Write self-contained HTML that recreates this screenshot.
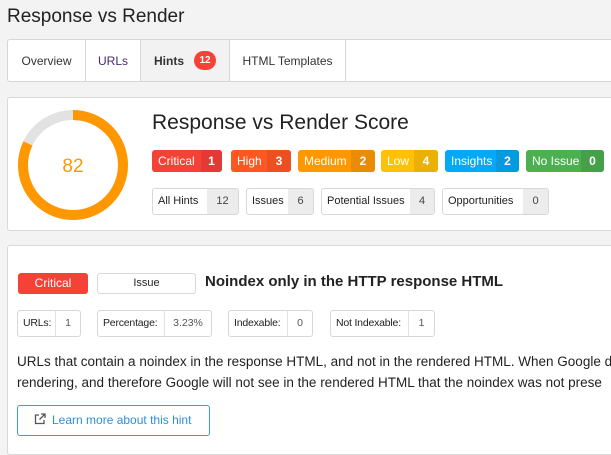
<!DOCTYPE html>
<html><head><style>
*{box-sizing:border-box;margin:0;padding:0}
body{width:611px;height:442px;overflow:hidden;background:#f3f3f3;font-family:"Liberation Sans",sans-serif;color:#222;position:relative}
.a{position:absolute}
h1{position:absolute;left:7px;top:6px;font-size:19px;font-weight:normal;color:#222}
.tabs{left:7px;top:39px;width:620px;height:43px;background:#fff;border:1px solid #d6d6d6;border-radius:3px;display:flex;font-size:12px}
.tabs div{border-right:1px solid #d6d6d6;display:flex;align-items:center;justify-content:center;color:#333}
.panel{background:#fff;border:1px solid #d8d8d8;border-radius:3px}
.b{position:absolute;display:flex;height:22px;border-radius:3px;overflow:hidden;color:#fff;font-size:12px;line-height:22px;white-space:nowrap}
.b span{padding-left:6px;flex:1}
.b i{font-style:normal;font-weight:bold;text-align:center}
.g{position:absolute;display:flex;height:27px;border:1px solid #d8d8d8;border-radius:3px;overflow:hidden;font-size:11px;line-height:25px;color:#222;background:#fff;white-space:nowrap}
.g span{padding-left:5px;flex:1}
.g i{font-style:normal;text-align:center;background:#ececec;color:#444}
.s{position:absolute;display:flex;height:27px;border:1px solid #d8d8d8;border-radius:3px;font-size:10.5px;line-height:25px;background:#fff;white-space:nowrap;overflow:hidden}
.s span{padding-left:5px;flex:1;border-right:1px solid #e2e2e2;letter-spacing:-0.2px}
.s i{font-style:normal;text-align:center;color:#555}
</style></head><body>
<h1>Response vs Render</h1>
<div class="a tabs">
<div style="width:78px">Overview</div>
<div style="width:55px;color:#4a2a6a">URLs</div>
<div style="width:89px;background:#f2f2f2;font-weight:bold">Hints <span style="display:inline-block;margin-left:10px;background:#f44336;color:#fff;border-radius:10px;width:22px;height:19px;line-height:19px;text-align:center;font-size:10px;font-weight:bold">12</span></div>
<div style="width:116px">HTML Templates</div>
</div>
<div class="a panel" style="left:7px;top:97px;width:620px;height:134px"></div>
<svg class="a" style="left:18px;top:110px" width="110" height="110">
<circle cx="55" cy="55" r="50" fill="none" stroke="#e2e2e2" stroke-width="10"/>
<circle cx="55" cy="55" r="50" fill="none" stroke="#ff9800" stroke-width="10" stroke-dasharray="257.6 400" transform="rotate(-90 55 55)"/>
<text x="55" y="62" text-anchor="middle" font-family="Liberation Sans" font-size="19" fill="#ff9800">82</text>
</svg>
<div class="a" style="left:152px;top:111px;font-size:21px;color:#222">Response vs Render Score</div>
<div class="b" style="left:152px;top:150px;width:70px;background:#f44336"><span>Critical</span><i style="width:21px;background:#e53935">1</i></div>
<div class="b" style="left:231px;top:150px;width:60px;background:#ff5722"><span>High</span><i style="width:24px;background:#ec5020">3</i></div>
<div class="b" style="left:298px;top:150px;width:77px;background:#ff9800"><span>Medium</span><i style="width:24px;background:#ea8c00">2</i></div>
<div class="b" style="left:381px;top:150px;width:57px;background:#ffc107"><span>Low</span><i style="width:24px;background:#ebb100">4</i></div>
<div class="b" style="left:445px;top:150px;width:74px;background:#03a9f4"><span>Insights</span><i style="width:23px;background:#039be0">2</i></div>
<div class="b" style="left:526px;top:150px;width:78px;background:#4caf50"><span>No Issue</span><i style="width:23px;background:#45a049">0</i></div>
<div class="g" style="left:152px;top:188px;width:87px"><span>All Hints</span><i style="width:31px">12</i></div>
<div class="g" style="left:246px;top:188px;width:68px"><span>Issues</span><i style="width:25px">6</i></div>
<div class="g" style="left:321px;top:188px;width:114px"><span>Potential Issues</span><i style="width:24px">4</i></div>
<div class="g" style="left:442px;top:188px;width:107px"><span>Opportunities</span><i style="width:25px">0</i></div>
<div class="a panel" style="left:7px;top:245px;width:620px;height:210px"></div>
<div class="a" style="left:18px;top:273px;width:70px;height:21px;background:#f44336;border-radius:3px;color:#fff;font-size:12px;text-align:center;line-height:21px">Critical</div>
<div class="a" style="left:97px;top:273px;width:99px;height:21px;border:1px solid #d8d8d8;border-radius:3px;font-size:11px;text-align:center;line-height:19px">Issue</div>
<div class="a" style="left:205px;top:273px;font-size:15px;font-weight:bold;color:#222">Noindex only in the HTTP response HTML</div>
<div class="s" style="left:17px;top:310px;width:64px"><span>URLs:</span><i style="width:24px">1</i></div>
<div class="s" style="left:97px;top:310px;width:115px"><span>Percentage:</span><i style="width:46px">3.23%</i></div>
<div class="s" style="left:228px;top:310px;width:85px"><span>Indexable:</span><i style="width:24px">0</i></div>
<div class="s" style="left:330px;top:310px;width:105px"><span>Not Indexable:</span><i style="width:25px">1</i></div>
<div class="a" style="left:17px;top:351px;font-size:13.5px;line-height:21px;color:#222;white-space:nowrap">URLs that contain a noindex in the response HTML, and not in the rendered HTML. When Google d<br>rendering, and therefore Google will not see in the rendered HTML that the noindex was not prese</div>
<div class="a" style="left:17px;top:405px;width:193px;height:31px;border:1px solid #3a9ee6;border-radius:3px;color:#2b8fdc;font-size:12px;line-height:29px;padding-left:16px">
<svg width="12" height="12" viewBox="0 0 12 12" style="vertical-align:-1px;margin-right:6px"><path d="M5 2H1.5v8.5H10V7" fill="none" stroke="#555" stroke-width="1.3"/><path d="M7 1h4v4M11 1L5.5 6.5" fill="none" stroke="#555" stroke-width="1.3"/></svg>Learn more about this hint</div>
</body></html>
